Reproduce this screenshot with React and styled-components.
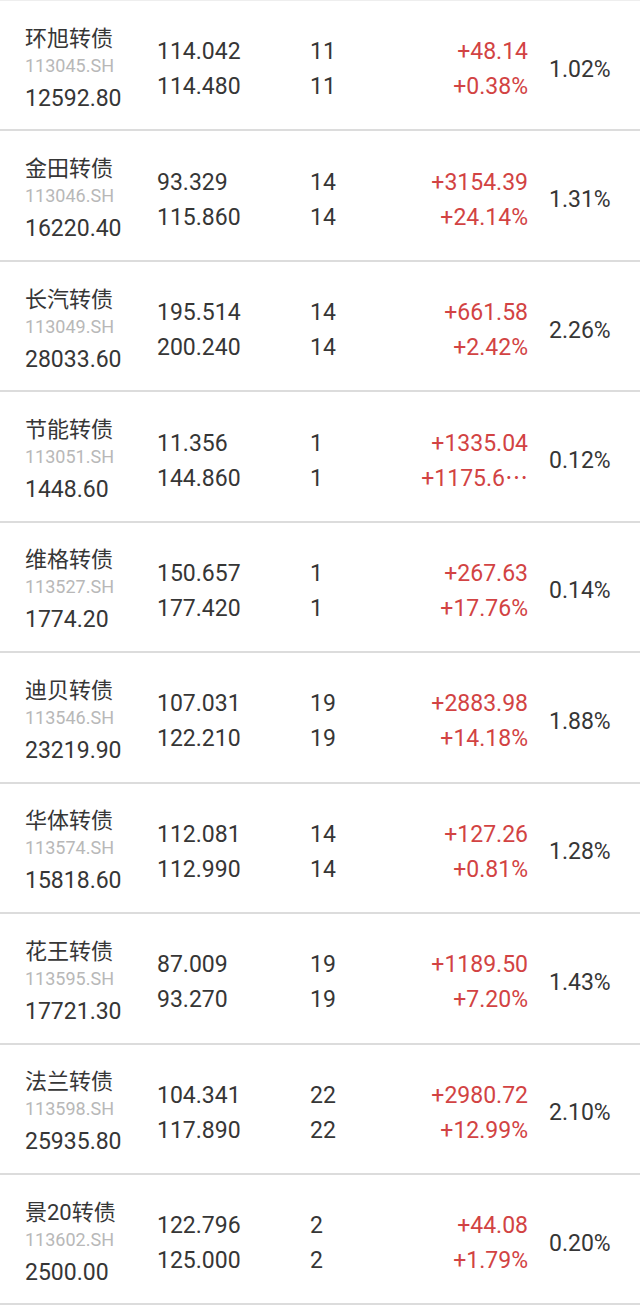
import React from 'react'
import styled, {createGlobalStyle} from 'styled-components'

const GlobalStyle = createGlobalStyle`
    html, body {
        margin: 0;
        padding: 0;
        background: #fff;
    }
    body {
        font-family: Roboto, "Noto Sans CJK SC", sans-serif;
        color: #363636;
    }
`

const List = styled.div`
    border-top: 1px solid #eee;
`

const Row = styled.div`
    box-sizing: border-box;
    height: 130.44px;
    border-bottom: 2px solid #dcdcdc;
    padding: 8px 0 0 25px;
    display: grid;
    grid-template-columns: 132px 153px 110px 108px 1fr;
    align-items: center;
`

const Info = styled.div`
    display: flex;
    flex-direction: column;
    margin-top: 4px;
`

const Name = styled.div`
    font-size: 22px;
    line-height: 27px;
    height: 27px;
`

const Code = styled.div`
    font-size: 18px;
    line-height: 27px;
    color: #b8b8b8;
`

const Price = styled.div`
    font-size: 23px;
    line-height: 39px;
`

const Stack = styled.div`
    display: flex;
    flex-direction: column;
    align-items: ${p => p.right ? 'flex-end' : 'flex-start'};
    color: ${p => p.red ? '#d24343' : '#363636'};
    min-width: 0;
`

const Val = styled.div`
    font-size: 23px;
    line-height: 35px;
    white-space: nowrap;
`

const Rate = styled.div`
    font-size: 23px;
    padding-left: 21px;
`

const data = [
    ['环旭转债', '113045.SH', '12592.80', '114.042', '114.480', '11', '+48.14', '+0.38%', '1.02%'],
    ['金田转债', '113046.SH', '16220.40', '93.329', '115.860', '14', '+3154.39', '+24.14%', '1.31%'],
    ['长汽转债', '113049.SH', '28033.60', '195.514', '200.240', '14', '+661.58', '+2.42%', '2.26%'],
    ['节能转债', '113051.SH', '1448.60', '11.356', '144.860', '1', '+1335.04', '+1175.6⋯', '0.12%'],
    ['维格转债', '113527.SH', '1774.20', '150.657', '177.420', '1', '+267.63', '+17.76%', '0.14%'],
    ['迪贝转债', '113546.SH', '23219.90', '107.031', '122.210', '19', '+2883.98', '+14.18%', '1.88%'],
    ['华体转债', '113574.SH', '15818.60', '112.081', '112.990', '14', '+127.26', '+0.81%', '1.28%'],
    ['花王转债', '113595.SH', '17721.30', '87.009', '93.270', '19', '+1189.50', '+7.20%', '1.43%'],
    ['法兰转债', '113598.SH', '25935.80', '104.341', '117.890', '22', '+2980.72', '+12.99%', '2.10%'],
    ['景20转债', '113602.SH', '2500.00', '122.796', '125.000', '2', '+44.08', '+1.79%', '0.20%'],
]

export default function App() {
    return <>
        <GlobalStyle/>
        <List>
            {data.map(([name, code, price, p1, p2, n, gain, pct, rate]) =>
                <Row key={code}>
                    <Info>
                        <Name>{name}</Name>
                        <Code>{code}</Code>
                        <Price>{price}</Price>
                    </Info>
                    <Stack>
                        <Val>{p1}</Val>
                        <Val>{p2}</Val>
                    </Stack>
                    <Stack>
                        <Val>{n}</Val>
                        <Val>{n}</Val>
                    </Stack>
                    <Stack right red>
                        <Val>{gain}</Val>
                        <Val>{pct}</Val>
                    </Stack>
                    <Rate>{rate}</Rate>
                </Row>
            )}
        </List>
    </>
}
